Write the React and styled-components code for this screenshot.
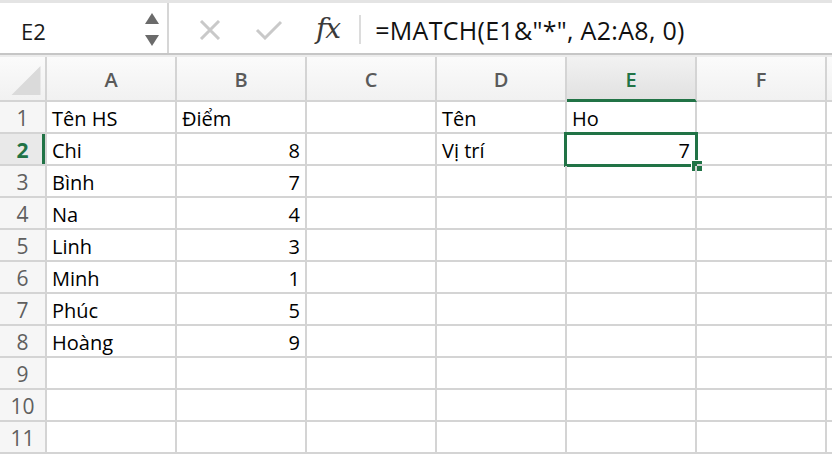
import React from 'react';
import styled, { createGlobalStyle, css } from 'styled-components';

const GREEN = '#217346';
const LINE = '#d4d4d4';

const columns = ['A', 'B', 'C', 'D', 'E', 'F'];

// each row: text per column, numbers are right aligned
const rows = [
  ['Tên HS', 'Điểm', '', 'Tên', 'Ho', ''],
  ['Chi', 8, '', 'Vị trí', 7, ''],
  ['Bình', 7, '', '', '', ''],
  ['Na', 4, '', '', '', ''],
  ['Linh', 3, '', '', '', ''],
  ['Minh', 1, '', '', '', ''],
  ['Phúc', 5, '', '', '', ''],
  ['Hoàng', 9, '', '', '', ''],
  ['', '', '', '', '', ''],
  ['', '', '', '', '', ''],
  ['', '', '', '', '', ''],
];

const activeCol = 'E';
const activeRow = 2;

function App() {
  return (
    <>
      <GlobalStyle />
      <Window>
        <FormulaBar>
          <NameBox>
            <NameText>E2</NameText>
            <Spinner>
              <Arrow viewBox="0 0 14 11"><path d="M7 0 L14 11 L0 11 Z" /></Arrow>
              <Arrow viewBox="0 0 14 11"><path d="M0 0 L14 0 L7 11 Z" /></Arrow>
            </Spinner>
          </NameBox>
          <Actions>
            <CancelIcon viewBox="0 0 24 20">
              <path d="M3 1 L21 19 M21 1 L3 19" />
            </CancelIcon>
            <EnterIcon viewBox="0 0 28 20">
              <path d="M2 10 L10 18 L26 2" />
            </EnterIcon>
            <Fx>fx</Fx>
            <Divider />
          </Actions>
          <FormulaText>=MATCH(E1&amp;"*", A2:A8, 0)</FormulaText>
        </FormulaBar>
        <Gap />
        <Sheet>
          <Corner>
            <CornerMark viewBox="0 0 30 30"><path d="M30 0 L30 30 L0 30 Z" /></CornerMark>
          </Corner>
          {columns.map(c => (
            <ColHeader key={c} active={c === activeCol}>{c}</ColHeader>
          ))}
          <ColHeader $filler />
          {rows.map((row, i) => (
            <React.Fragment key={i}>
              <RowHeader active={i + 1 === activeRow}>{i + 1}</RowHeader>
              {row.map((val, j) => {
                const selected = i + 1 === activeRow && columns[j] === activeCol;
                return (
                  <Cell key={j} numeric={typeof val === 'number'}>
                    {val}
                    {selected && (
                      <Selection>
                        <Handle />
                      </Selection>
                    )}
                  </Cell>
                );
              })}
              <Cell $filler />
            </React.Fragment>
          ))}
        </Sheet>
      </Window>
    </>
  );
}

const GlobalStyle = createGlobalStyle`
  html, body {
    margin: 0;
    padding: 0;
    background: #fff;
    overflow: hidden;
  }
  body {
    font-family: "Open Sans", "Liberation Sans", sans-serif;
  }
`;

const Window = styled.div`
  width: 832px;
  height: 456px;
  display: flex;
  flex-direction: column;
  background: #fff;
`;

const FormulaBar = styled.div`
  display: flex;
  align-items: stretch;
  height: 50px;
  border-top: 3px solid #e4e4e4;
  border-bottom: 2px solid #c6c6c6;
  background: #fff;
`;

const NameBox = styled.div`
  width: 169px;
  display: flex;
  align-items: center;
  justify-content: space-between;
  padding: 0 8px 0 21px;
  box-sizing: border-box;
  border-right: 2px solid #d6d6d6;
`;

const NameText = styled.span`
  font-size: 22px;
  color: #1a1a1a;
  margin-top: 5px;
`;

const Spinner = styled.div`
  display: flex;
  flex-direction: column;
  gap: 11px;
  margin-top: 2px;
`;

const Arrow = styled.svg`
  width: 14px;
  height: 11px;
  fill: #6b6b6b;
`;

const Actions = styled.div`
  display: flex;
  align-items: center;
  padding-left: 29px;
`;

const iconBase = css`
  height: 20px;
  fill: none;
  stroke: #c9c9c9;
  stroke-width: 3;
  margin-top: 4px;
`;

const CancelIcon = styled.svg`
  ${iconBase};
  width: 24px;
  margin-right: 33px;
`;

const EnterIcon = styled.svg`
  ${iconBase};
  width: 28px;
  margin-right: 33px;
`;

const Fx = styled.span`
  font-family: "DejaVu Serif", "Liberation Serif", serif;
  font-style: italic;
  font-size: 28px;
  color: #3a3a3a;
  letter-spacing: -1px;
  margin-top: 1px;
`;

const Divider = styled.div`
  width: 2px;
  height: 29px;
  background: #dcdcdc;
  margin: 3px 0 0 19px;
`;

const FormulaText = styled.span`
  align-self: center;
  margin: 3px 0 0 14px;
  font-size: 25px;
  letter-spacing: 0.3px;
  color: #111;
  white-space: nowrap;
`;

const Gap = styled.div`
  height: 2px;
  background: #ececec;
`;

const Sheet = styled.div`
  display: grid;
  grid-template-columns: 47px repeat(6, 130px) 1fr;
  grid-template-rows: 45px repeat(11, 32px);
`;

const headerBase = css`
  box-sizing: border-box;
  border-right: 2px solid ${LINE};
  border-bottom: 2px solid ${LINE};
  display: flex;
  align-items: center;
  justify-content: center;
  color: #5e5e5e;
`;

const Corner = styled.div`
  ${headerBase};
  background: linear-gradient(#fbfbfb, #f1f1f1);
  align-items: flex-end;
  justify-content: flex-end;
  padding: 0 4px 5px 0;
`;

const CornerMark = styled.svg`
  width: 30px;
  height: 29px;
  fill: #dadada;
`;

const ColHeader = styled.div`
  ${headerBase};
  font-size: 20px;
  font-weight: 600;
  padding-top: 2px;
  background: ${p => (p.active ? 'linear-gradient(#f2f2f2, #e1e1e1)' : 'linear-gradient(#fbfbfb, #f1f1f1)')};
  color: ${p => (p.active ? GREEN : '#5a5a5a')};
  border-bottom: ${p => (p.active ? `3px solid ${GREEN}` : `2px solid ${LINE}`)};
  ${p => p.$filler && css`border-right: none;`}
`;

const RowHeader = styled.div`
  ${headerBase};
  font-size: 21px;
  background: ${p => (p.active ? '#e9e9e9' : '#f6f6f6')};
  color: ${p => (p.active ? GREEN : '#5f5f5f')};
  font-weight: ${p => (p.active ? 700 : 400)};
  box-shadow: ${p => (p.active ? `inset -3px 0 0 ${GREEN}` : 'none')};
  padding-top: 2px;
`;

const Cell = styled.div`
  position: relative;
  box-sizing: border-box;
  border-right: ${p => (p.$filler ? 'none' : `2px solid ${LINE}`)};
  border-bottom: 2px solid ${LINE};
  display: flex;
  align-items: center;
  justify-content: ${p => (p.numeric ? 'flex-end' : 'flex-start')};
  padding: 2px 5px 0 5px;
  font-size: 20px;
  color: #000;
  white-space: nowrap;
`;

const Selection = styled.div`
  position: absolute;
  left: -3px;
  top: -2px;
  right: -3px;
  bottom: -3px;
  border: 3px solid ${GREEN};
  pointer-events: none;
`;

const Handle = styled.div`
  position: absolute;
  right: -7px;
  bottom: -7px;
  width: 10px;
  height: 10px;
  background: ${GREEN};
  box-shadow: -1px -1px 0 #fff;
`;

export default App;
